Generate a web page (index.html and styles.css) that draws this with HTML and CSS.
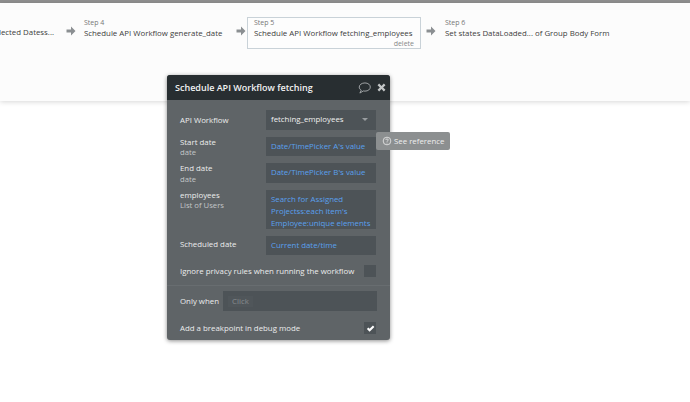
FILE: index.html
```html
<!DOCTYPE html>
<html>
<head>
<meta charset="utf-8">
<title>Schedule API Workflow</title>
<link rel="stylesheet" href="styles.css">
</head>
<body>
<div class="topbar"></div>
<div class="canvas">
  <div class="steps">
    <div class="step step-cut"><div class="step-title">Display list of Selected Datess...</div></div>
    <svg class="arrow" viewBox="0 0 10 10"><path d="M5 .5 9.500 5 5 9.500 5 6.500H.5v-3H5z"/></svg>
    <div class="step step-4"><div class="step-no">Step 4</div><div class="step-title">Schedule API Workflow generate_date</div></div>
    <svg class="arrow" viewBox="0 0 10 10"><path d="M5 .5 9.500 5 5 9.500 5 6.500H.5v-3H5z"/></svg>
    <div class="step step-active"><div class="step-no">Step 5</div><div class="step-title">Schedule API Workflow fetching_employees</div><div class="step-del">delete</div></div>
    <svg class="arrow" viewBox="0 0 10 10"><path d="M5 .5 9.500 5 5 9.500 5 6.500H.5v-3H5z"/></svg>
    <div class="step step-6"><div class="step-no">Step 6</div><div class="step-title">Set states DataLoaded... of Group Body Form</div></div>
  </div>
</div>

<div class="panel">
  <div class="panel-head">
    <span class="panel-title">Schedule API Workflow fetching</span>
    <svg class="ic-comment" viewBox="0 0 14 13"><path d="M7.500 1C4 1 1.300 3 1.300 5.500c0 1.400.8 2.600 2.200 3.400L2 12l3.700-2.300c.6.100 1.200.2 1.800.2 3.400 0 5.800-2 5.800-4.400S10.900 1 7.500 1z"/></svg>
    <svg class="ic-close" viewBox="0 0 10 10"><path d="M2.400.6 5 3.200 7.600.6l1.800 1.800L6.800 5l2.600 2.600-1.800 1.800L5 6.800 2.400 9.400.6 7.600 3.200 5 .6 2.400z"/></svg>
  </div>
  <div class="panel-body">
    <div class="row row-first">
      <div class="label">API Workflow</div>
      <div class="field field-select"><span>fetching_employees</span><i class="caret"></i></div>
    </div>
    <div class="row">
      <div class="label">Start date<small>date</small></div>
      <div class="field field-link">Date/TimePicker A's value</div>
    </div>
    <div class="row">
      <div class="label">End date<small>date</small></div>
      <div class="field field-link">Date/TimePicker B's value</div>
    </div>
    <div class="row">
      <div class="label">employees<small>List of Users</small></div>
      <div class="field field-link field-tall">Search for Assigned Projectss:each item's Employee:unique elements</div>
    </div>
    <div class="row row-sched">
      <div class="label label-mid">Scheduled date</div>
      <div class="field field-link">Current date/time</div>
    </div>
    <div class="check-row check-privacy">
      <span>Ignore privacy rules when running the workflow</span>
      <span class="box"></span>
    </div>
    <div class="only-row">
      <span>Only when</span>
      <div class="only-input"><span class="click">Click</span></div>
    </div>
    <div class="check-row check-debug">
      <span>Add a breakpoint in debug mode</span>
      <span class="box"><svg viewBox="0 0 10 10"><path d="M1 5.500 2.600 4 4 5.400 7.700 1.700 9.300 3.300 4 8.500z"/></svg></span>
    </div>
  </div>
  <div class="tip">
    <svg viewBox="0 0 12 12"><circle cx="6" cy="6" r="4.600"/><path d="M4.500 4.800C4.600 3.900 5.200 3.500 6 3.500c.9 0 1.500.5 1.500 1.200 0 1.100-1.500 1.100-1.500 2.200M6 7.900v1"/></svg>
    See reference
  </div>
</div>
</body>
</html>
```
FILE: styles.css
```css
* { box-sizing: border-box; }
html, body { margin: 0; height: 100%; }
body {
  width: 690px;
  height: 402px;
  overflow: hidden;
  background: #fff;
  position: relative;
  font-family: "Open Sans", "Liberation Sans", sans-serif;
}
.topbar { height: 3px; background: #8f8f8f; }
.canvas {
  height: 98px;
  background: #fcfcfc;
  box-shadow: 0 1px 5px rgba(0,0,0,.16);
  padding-top: 14px;
}
.steps { display: flex; align-items: flex-start; }
.arrow { width: 10px; height: 10px; fill: #8b8f92; flex: none; margin-top: 9px; }
.step { flex: none; color: #444; }
.step-cut {
  width: 54px;
  margin-right: 12px;
  display: flex;
  justify-content: flex-end;
  overflow: hidden;
  padding-top: 9px;
}
.step-cut .step-title { flex: none; }
.step-4 { margin-left: 8px; margin-right: 8px; width: 144px; padding-top: 1.500px; }
.step-active {
  width: 174px;
  height: 32px;
  margin-left: 1px;
  margin-right: 5px;
  border: 1px solid #c9d2d8;
  padding: .5px 6px 0;
  background: #fdfdfd;
}
.step-6 { margin-left: 9px; padding-top: 1.500px; }
.step-no { font-size: 7px; line-height: 8px; color: #777; }
.step-title { font-size: 7.850px; line-height: 12px; white-space: nowrap; color: #3c3c3c; }
.step-del { font-size: 7px; line-height: 10px; color: #888; text-align: right; }

.panel {
  position: absolute;
  left: 167px;
  top: 75px;
  width: 223px;
  height: 265px;
  background: #5f6467;
  border-radius: 3px;
  box-shadow: 0 1px 4px rgba(0,0,0,.45);
}
.panel-head {
  height: 25px;
  background: #282e31;
  border-radius: 3px 3px 0 0;
  display: flex;
  align-items: center;
  padding: 0 3px 0 8px;
  color: #f2f2f2;
}
.panel-title { font-size: 9px; font-weight: 600; flex: 1; white-space: nowrap; }
.ic-comment { width: 13px; height: 12px; fill: none; stroke: #a9adaf; stroke-width: 1; margin-right: 6px; }
.ic-close { width: 9px; height: 9px; fill: #c4c7c8; margin-right: 1px; }
.panel-body { padding: 10px 14px 0 13px; font-size: 7.850px; color: #eceded; position: relative; }
.row { display: flex; justify-content: space-between; margin-bottom: 7px; }
.row-sched { margin-bottom: 10px; }
.label { line-height: 9.500px; padding-top: 1px; height: 19px; }
.label small { display: block; font-size: 7.700px; color: #c3c6c7; line-height: 10px; }
.row-first .label { padding-top: 5.500px; }
.label-mid { padding-top: 4.500px; }
.field {
  width: 110px;
  height: 19.500px;
  background: #4d5357;
  padding: 0 5px;
  line-height: 19px;
  flex: none;
}
.field-select { display: flex; align-items: center; justify-content: space-between; padding-right: 8px; color: #f0f0f0; }
.field-link { color: #5aa0ee; white-space: nowrap; }
.field-tall { white-space: normal; line-height: 12px; padding-top: 3px; height: 39px; }
.caret { width: 0; height: 0; border: 3px solid transparent; border-top: 3px solid #999da0; border-bottom: 0; }
.check-row { display: flex; justify-content: space-between; align-items: center; height: 12px; }
.check-privacy { margin-bottom: 8px; }
.box { width: 12px; height: 12px; background: #4d5357; display: flex; align-items: center; justify-content: center; }
.box svg { width: 9px; height: 9px; fill: #fff; }
.only-row {
  display: flex;
  align-items: center;
  justify-content: space-between;
  border-top: 1px solid #686d70;
  margin: 0 -14px 0 -13px;
  padding: 5px 13px 0;
  height: 26px;
}
.only-input { width: 154px; height: 20px; background: #4d5357; padding: 0 5px; display: flex; align-items: center; flex: none; }
.click { color: #868b8e; padding: 0 4px; background: #50565a; line-height: 11px; }
.check-debug { margin-top: 11px; }
.tip {
  position: absolute;
  left: 209px;
  top: 57px;
  width: 74px;
  height: 18px;
  background: #8c8f90;
  border-radius: 2px;
  color: #eee;
  font-size: 7.850px;
  display: flex;
  align-items: center;
  gap: 2px;
  padding-left: 6px;
  white-space: nowrap;
}
.tip svg { width: 10px; height: 10px; fill: none; stroke: #e8e8e8; stroke-width: 1; flex: none; }
```
